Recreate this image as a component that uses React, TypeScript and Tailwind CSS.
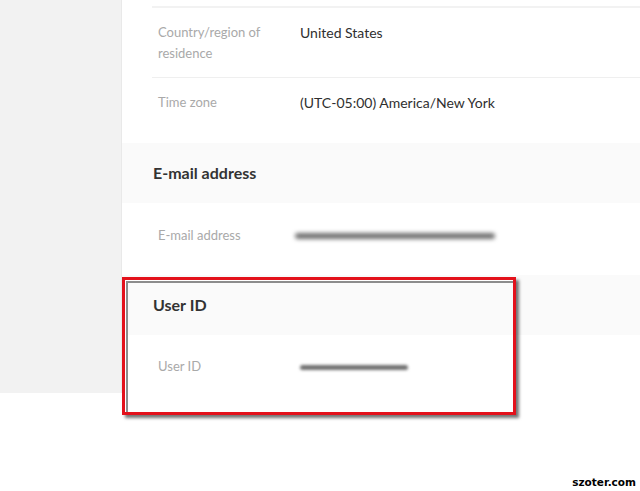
export default function App() {
  return (
    <div className="relative h-[491px] w-[640px] overflow-hidden bg-white font-['Lato','Open_Sans',sans-serif]">
      <div className="flex h-[393px]">
        {/* left sidebar */}
        <div className="w-[122px] shrink-0 border-r border-[#e9e9e9] bg-[#f2f2f2]" />

        {/* settings panel */}
        <div className="flex-1">
          <div className="ml-[30px] mt-[6px] border-t-[2px] border-[#f2f2f2]">
            <div className="flex h-[70px] border-b border-[#efefef] pl-[6px] pt-[14px]">
              <div className="w-[142px] pr-[30px] text-[13px] leading-[21px] text-[#a9a9a9]">
                Country/region of residence
              </div>
              <div className="text-[14px] leading-[21px] text-[#2f2f2f]">United States</div>
            </div>
            <div className="flex h-[65px] pl-[6px] pt-[14px]">
              <div className="w-[142px] text-[13px] leading-[21px] text-[#a9a9a9]">Time zone</div>
              <div className="text-[14px] leading-[21px] text-[#2f2f2f]">
                (UTC-05:00) America/New York
              </div>
            </div>
          </div>

          <div className="flex h-[60px] items-center bg-[#fafafa] pl-[31px]">
            <h2 className="text-[16px] font-bold text-[#333]">E-mail address</h2>
          </div>
          <div className="ml-[30px] flex h-[72px] pl-[6px] pt-[22px]">
            <div className="w-[137px] text-[13px] leading-[21px] text-[#a9a9a9]">E-mail address</div>
            <div className="mt-[8px] h-[6px] w-[200px] rounded-full bg-[#707070] blur-[2px]" />
          </div>

          <div className="flex h-[60px] items-center bg-[#fafafa] pl-[31px]">
            <h2 className="text-[16px] font-bold text-[#333]">User ID</h2>
          </div>
          <div className="ml-[30px] flex h-[58px] pl-[6px] pt-[21px]">
            <div className="w-[142px] text-[13px] leading-[21px] text-[#a9a9a9]">User ID</div>
            <div className="mt-[9px] h-[5px] w-[108px] rounded-full bg-[#707070] blur-[1.5px]" />
          </div>
        </div>
      </div>

      {/* red highlight frame */}
      <div className="absolute left-[122px] top-[277px] h-[138px] w-[394px] border-[3px] border-[#e3111b] shadow-[3px_3px_3px_rgba(0,0,0,0.55),inset_1px_1px_0_#fff,inset_3px_3px_0_#8c8c8c]" />

      <div className="absolute bottom-0 right-[4px] font-['DejaVu_Sans',sans-serif] text-[10.5px] font-bold text-black">
        szoter.com
      </div>
    </div>
  );
}
